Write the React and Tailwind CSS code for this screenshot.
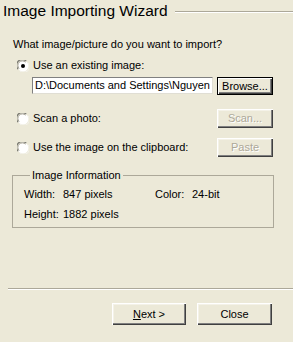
function Radio({ checked }) {
  return (
    <svg width="12" height="12" viewBox="0 0 12 12" className="shrink-0">
      <circle cx="6" cy="6" r="5.5" fill="#ffffff" />
      <path d="M1.2 9.2 A5.3 5.3 0 0 1 9.2 1.2" fill="none" stroke="#7a7a72" strokeWidth="1.2" />
      <path d="M2.2 8.5 A4.2 4.2 0 0 1 8.5 2.2" fill="none" stroke="#a8a598" strokeWidth="1" />
      <path d="M2.8 10.8 A5.3 5.3 0 0 0 10.8 2.8" fill="none" stroke="#f4f3ee" strokeWidth="1" />
      {checked && <circle cx="6" cy="6" r="2" fill="#000000" />}
    </svg>
  );
}

function Btn({ children, className = "", disabled, isDefault }) {
  const bevel = isDefault
    ? "border border-black shadow-[inset_1px_1px_#ffffff,inset_-1px_-1px_#404040,inset_-2px_-2px_#808080]"
    : "shadow-[inset_1px_1px_#ffffff,inset_-1px_-1px_#404040,inset_-2px_-2px_#808080,inset_2px_2px_#f4f2e8]";
  return (
    <div
      className={`flex items-center justify-center bg-[#ece9d8] ${bevel} ${
        disabled ? "text-[#aca899] [text-shadow:1px_1px_0_#ffffff]" : "text-black"
      } ${className}`}
    >
      {children}
    </div>
  );
}

export default function App() {
  return (
    <div className="w-[293px] h-[342px] bg-[#ece9d8] text-black font-['Liberation_Sans',Arial,sans-serif] text-[11px] flex flex-col overflow-hidden">
      <div className="flex items-center h-[22px] pl-[3px]">
        <span className="text-[15.5px] leading-none">Image Importing Wizard</span>
        <div className="flex-1 ml-[7px] mt-[2px] border-t border-t-[#aca899] border-b border-b-white" />
      </div>

      <div className="pl-[13px] mt-[16px] leading-[13px]">What image/picture do you want to import?</div>

      <div className="pl-[17px] mt-[8px] flex items-center h-[13px] gap-[4px]">
        <Radio checked />
        <span>Use an existing image:</span>
      </div>

      <div className="flex mt-[5px] pl-[32px] h-[17px]">
        <div className="w-[181px] bg-white border border-t-[#808080] border-l-[#808080] border-r-[#e0ded4] border-b-[#e0ded4] pl-[2px] leading-[15px] whitespace-nowrap overflow-hidden">
          D:\Documents and Settings\Nguyen
        </div>
        <Btn isDefault className="ml-[4px] w-[56px] h-[18px]">Browse...</Btn>
      </div>

      <div className="flex items-center mt-[15px] h-[19px] pl-[17px]">
        <Radio />
        <span className="ml-[4px] flex-1">Scan a photo:</span>
        <Btn disabled className="w-[56px] h-[19px] mr-[20px]">Scan...</Btn>
      </div>

      <div className="flex items-center mt-[10px] h-[19px] pl-[17px]">
        <Radio />
        <span className="ml-[4px] flex-1">Use the image on the clipboard:</span>
        <Btn disabled className="w-[56px] h-[19px] mr-[20px]">Paste</Btn>
      </div>

      <fieldset className="ml-[12px] w-[262px] mt-[12px] border border-[#aca899] pl-[11px] pb-[3px]">
        <legend className="ml-[6px] px-[2px] leading-[13px]">Image Information</legend>
        <div className="grid grid-cols-[39px_92px_37px_auto] leading-[20px] mt-[2px]">
          <span>Width:</span>
          <span>847 pixels</span>
          <span>Color:</span>
          <span>24-bit</span>
          <span>Height:</span>
          <span>1882 pixels</span>
        </div>
      </fieldset>

      <div className="ml-[8px] mt-[60px] border-t border-t-[#aca899] border-b border-b-white" />

      <div className="flex mt-[13px] pl-[112px] gap-[11px]">
        <Btn className="w-[74px] h-[22px]">
          <span>
            <u>N</u>ext &gt;
          </span>
        </Btn>
        <Btn className="w-[75px] h-[22px]">Close</Btn>
      </div>
    </div>
  );
}
